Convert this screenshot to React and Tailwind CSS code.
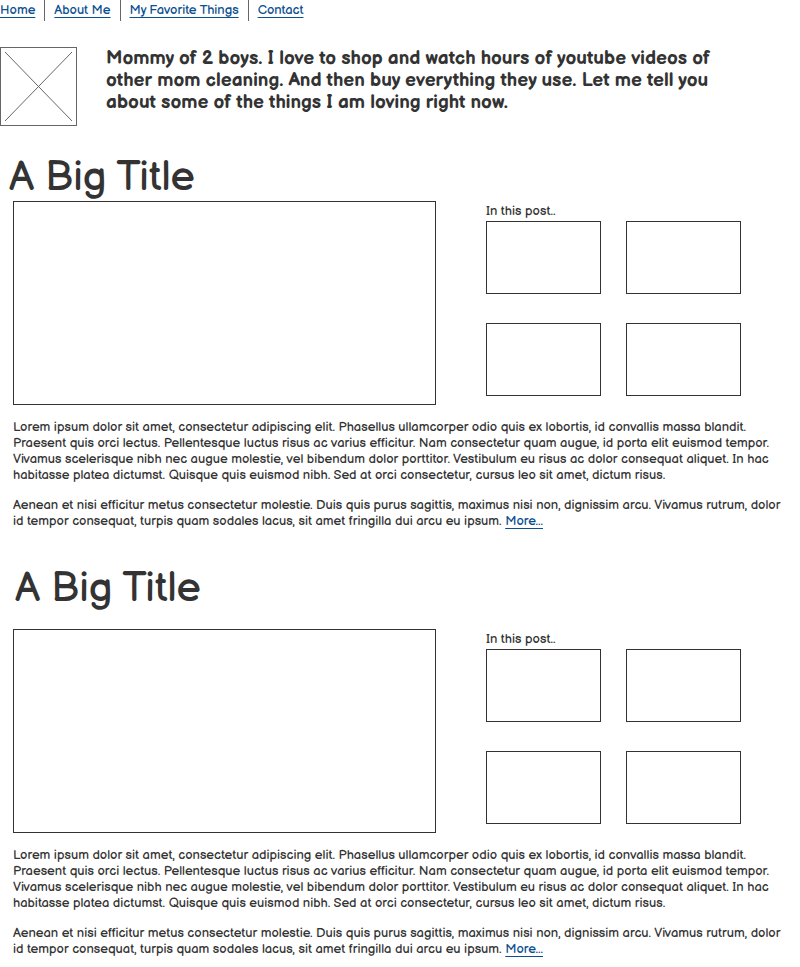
const NAV_LINKS = ["Home", "About Me", "My Favorite Things", "Contact"];

function Placeholder() {
  return (
    <svg
      className="h-[79px] w-[77px] shrink-0"
      viewBox="0 0 77 79"
      fill="none"
      stroke="#666666"
      role="img"
      aria-label="Profile picture"
    >
      <rect x="0.5" y="0.5" width="76" height="78" />
      <path d="M5 5L72 74M72 5L5 74" />
    </svg>
  );
}

function Post({ id, heading }) {
  return (
    <article>
      {heading}
      <div className="flex gap-[50px] pl-[13px]">
        <div className="h-[204px] w-[423px] border border-[#333]" />
        <aside aria-labelledby={id}>
          <h2 id={id} className="pt-[2px] pb-[2px] text-[13px] leading-[16px]">
            In this post..
          </h2>
          <div className="grid grid-cols-[115px_115px] gap-x-[25px] gap-y-[29px]">
            <div className="h-[73px] border border-[#333]" />
            <div className="h-[73px] border border-[#333]" />
            <div className="h-[73px] border border-[#333]" />
            <div className="h-[73px] border border-[#333]" />
          </div>
        </aside>
      </div>
      <div className="space-y-[14px] pt-[14px] pl-[13px] text-[13px] leading-[16px] whitespace-nowrap">
        <p>
          Lorem ipsum dolor sit amet, consectetur adipiscing elit. Phasellus ullamcorper odio quis ex lobortis, id convallis massa blandit.
          <br />
          Praesent quis orci lectus. Pellentesque luctus risus ac varius efficitur. Nam consectetur quam augue, id porta elit euismod tempor.
          <br />
          Vivamus scelerisque nibh nec augue molestie, vel bibendum dolor porttitor. Vestibulum eu risus ac dolor consequat aliquet. In hac
          <br />
          habitasse platea dictumst. Quisque quis euismod nibh. Sed at orci consectetur, cursus leo sit amet, dictum risus.
        </p>
        <p>
          Aenean et nisi efficitur metus consectetur molestie. Duis quis purus sagittis, maximus nisi non, dignissim arcu. Vivamus rutrum, dolor
          <br />
          id tempor consequat, turpis quam sodales lacus, sit amet fringilla dui arcu eu ipsum.{" "}
          <a href="#more" className="text-[#0b4f91] underline underline-offset-3">
            More...
          </a>
        </p>
      </div>
    </article>
  );
}

export default function App() {
  return (
    <div className="overflow-x-hidden bg-white pb-[10px] font-['Balsamiq_Sans','Inter',sans-serif] text-[#333] [font-feature-settings:'cv11','cv08'] [font-variant-ligatures:none]">
      <nav className="flex h-[21px] text-[13px] leading-[20px]">
        {NAV_LINKS.map((name) => (
          <div key={name} className="border-r border-[#666] pr-[9px] pl-[9px] first:pl-0 last:border-r-0">
            <a href={"#" + name} className="text-[#0b4f91] underline underline-offset-3">
              {name}
            </a>
          </div>
        ))}
      </nav>
      <header className="flex gap-[29px] pt-[26px]">
        <Placeholder />
        <p className="pt-px text-[19px] leading-[22px] font-semibold whitespace-nowrap">
          Mommy of 2 boys. I love to shop and watch hours of youtube videos of
          <br />
          other mom cleaning. And then buy everything they use. Let me tell you
          <br />
          about some of the things I am loving right now.
        </p>
      </header>
      <main>
        <Post
          id="in-post-1"
          heading={<h1 className="pt-[29px] pl-[9px] text-[41px] leading-[46px]">A Big Title</h1>}
        />
        <Post
          id="in-post-2"
          heading={<h1 className="pt-[37px] pb-[17px] pl-[15px] text-[41px] leading-[46px]">A Big Title</h1>}
        />
      </main>
    </div>
  );
}
